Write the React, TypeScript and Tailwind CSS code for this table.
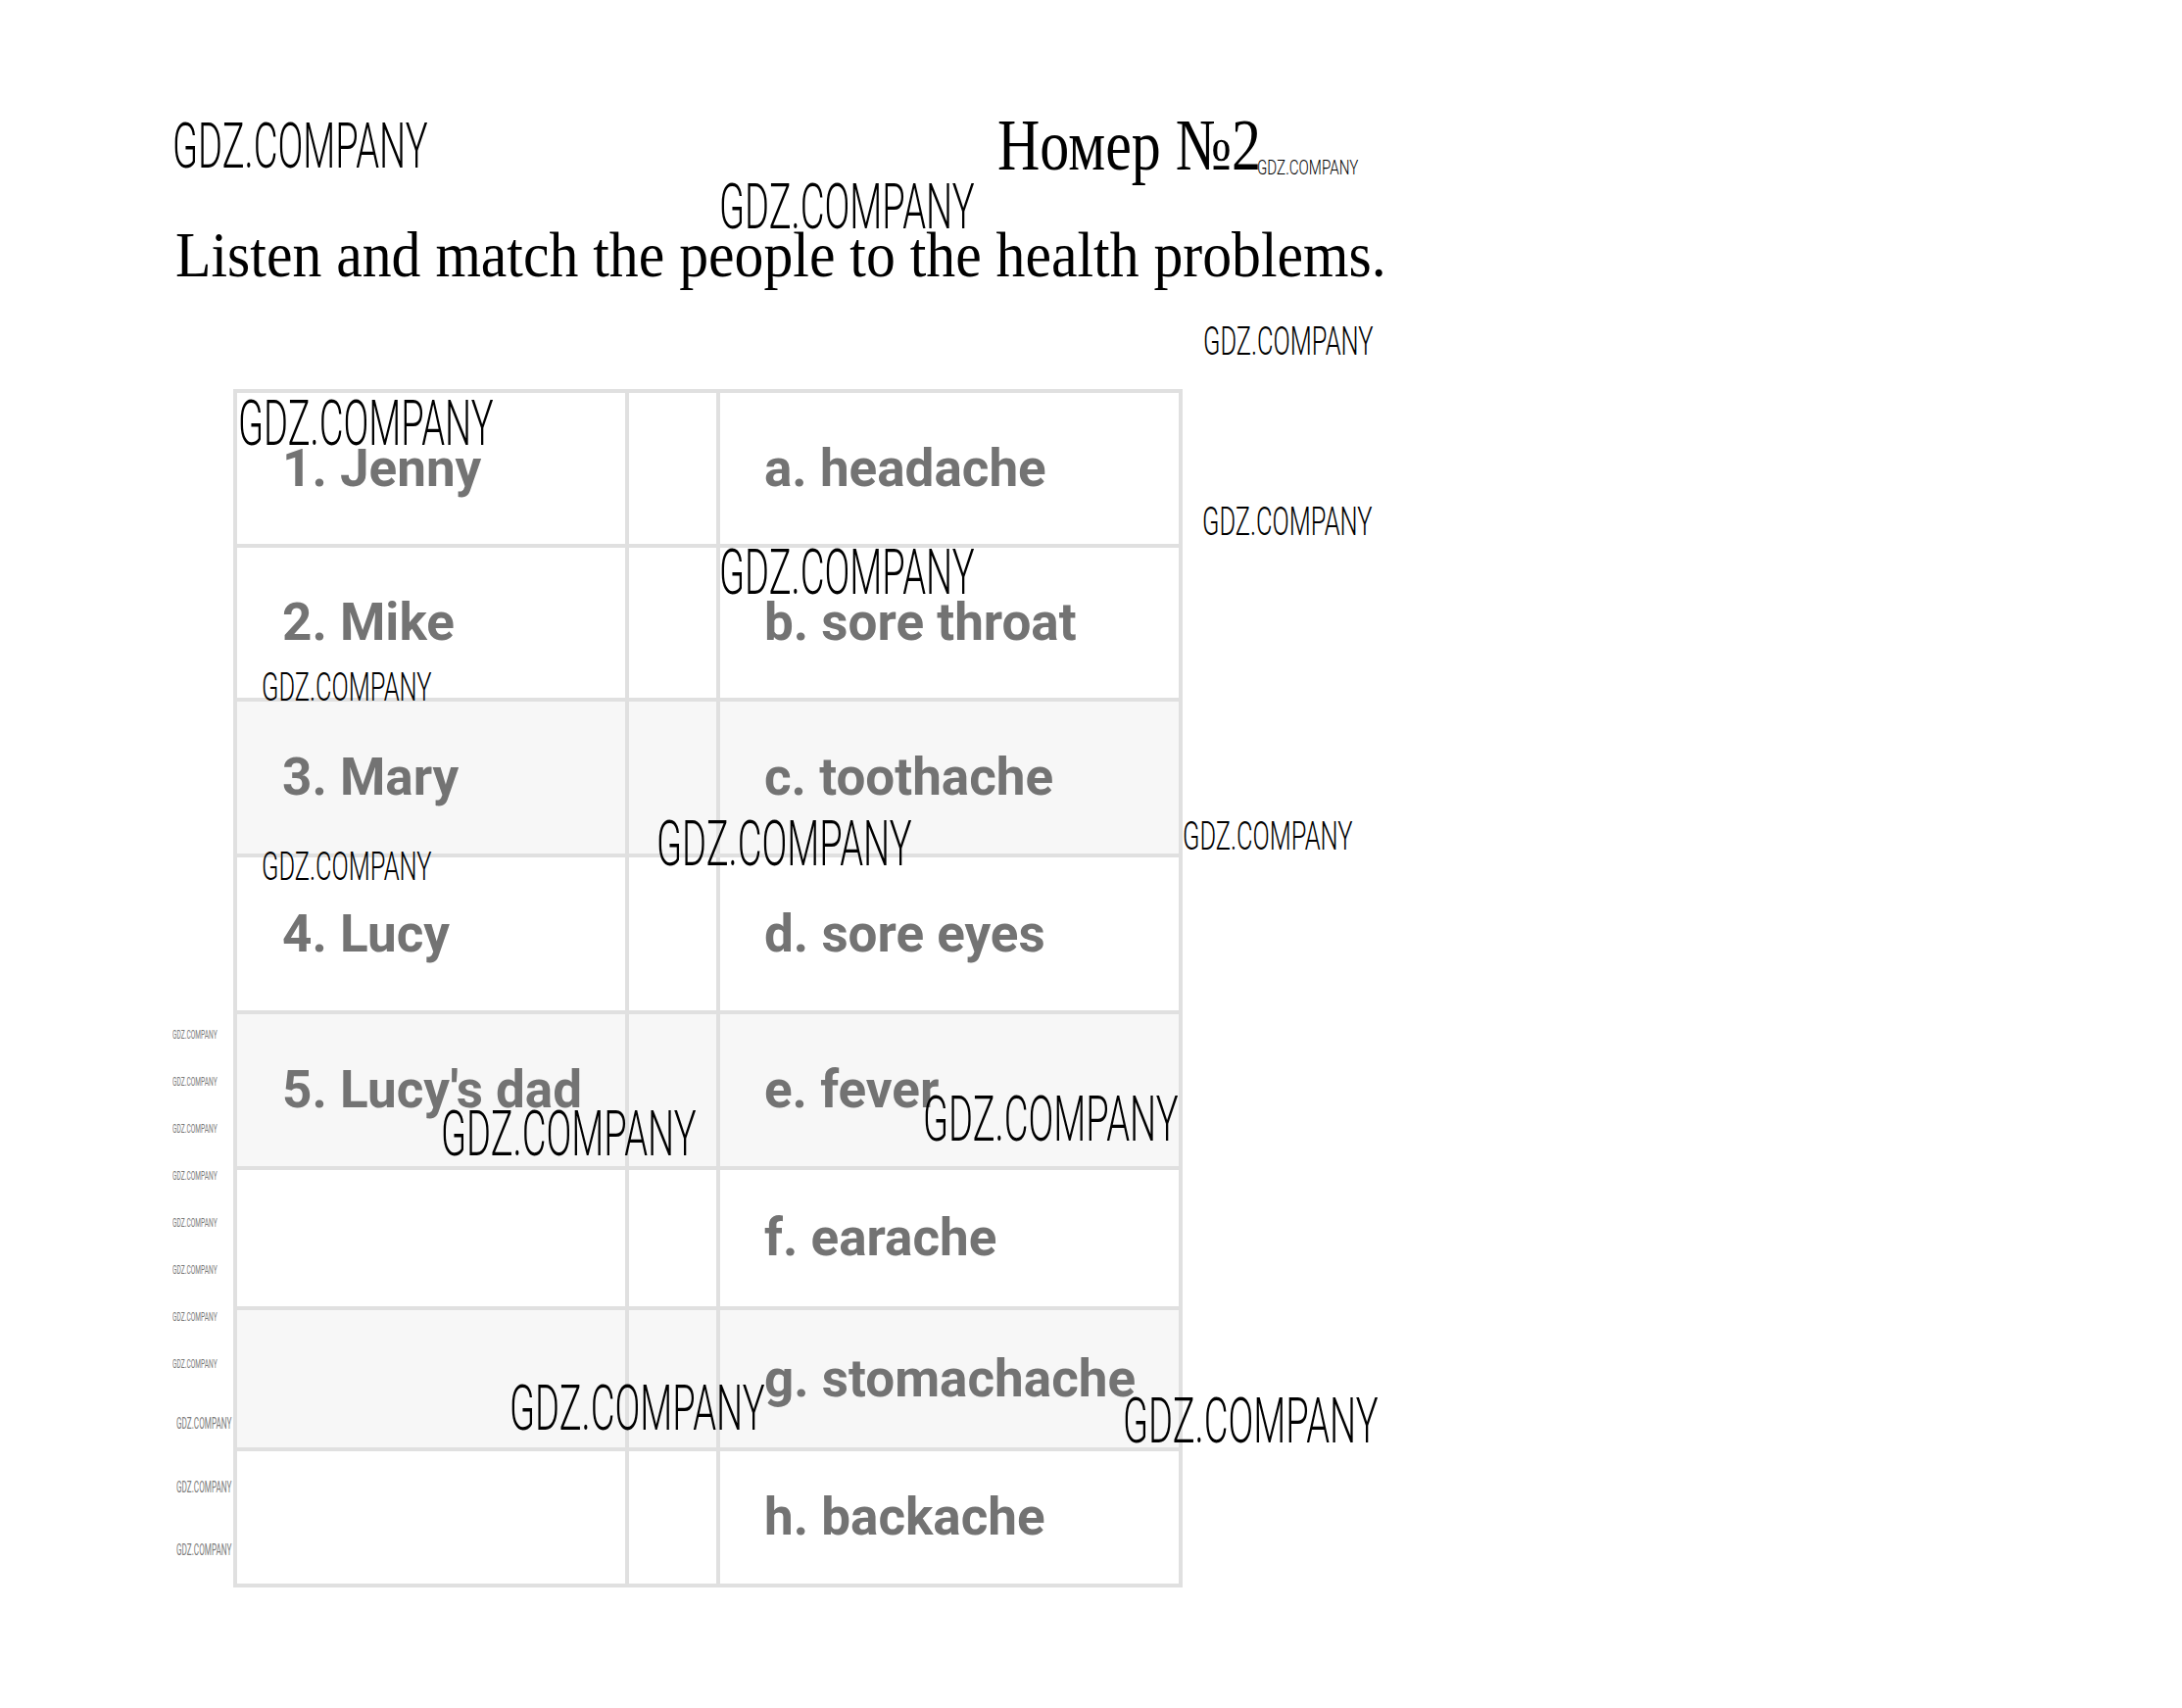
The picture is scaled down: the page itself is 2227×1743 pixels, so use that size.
import React from 'react';

const rows = [
  { left: '1. Jenny', right: 'a. headache', shade: false },
  { left: '2. Mike', right: 'b. sore throat', shade: false },
  { left: '3. Mary', right: 'c. toothache', shade: true },
  { left: '4. Lucy', right: 'd. sore eyes', shade: false },
  { left: "5. Lucy's dad", right: 'e. fever', shade: true },
  { left: '', right: 'f. earache', shade: false },
  { left: '', right: 'g. stomachache', shade: true },
  { left: '', right: 'h. backache', shade: false },
];

// watermark stamps laid over the scan
const marks = [
  'left-[176px] top-[117px] text-[65px] scale-x-[0.587] font-light text-black',
  'left-[734px] top-[179px] text-[65px] scale-x-[0.587] font-light text-black',
  'left-[243px] top-[400px] text-[65px] scale-x-[0.587] font-light text-black',
  'left-[734px] top-[552px] text-[65px] scale-x-[0.587] font-light text-black',
  'left-[670px] top-[829px] text-[65px] scale-x-[0.587] font-light text-black',
  'left-[450px] top-[1125px] text-[65px] scale-x-[0.587] font-light text-black',
  'left-[942px] top-[1110px] text-[65px] scale-x-[0.587] font-light text-black',
  'left-[520px] top-[1405px] text-[65px] scale-x-[0.587] font-light text-black',
  'left-[1146px] top-[1418px] text-[65px] scale-x-[0.587] font-light text-black',
  'left-[1228px] top-[328px] text-[41px] scale-x-[0.62] font-light text-black',
  'left-[1227px] top-[512px] text-[41px] scale-x-[0.62] font-light text-black',
  'left-[1207px] top-[833px] text-[41px] scale-x-[0.62] font-light text-black',
  'left-[267px] top-[681px] text-[41px] scale-x-[0.62] font-light text-black',
  'left-[267px] top-[864px] text-[41px] scale-x-[0.62] font-light text-black',
  'left-[1283px] top-[161px] text-[21px] scale-x-[0.72] font-light text-black',
  'left-[176px] top-[1050px] text-[12px] scale-x-[0.55] font-normal text-[#7a7a7a]',
  'left-[176px] top-[1098px] text-[12px] scale-x-[0.55] font-normal text-[#7a7a7a]',
  'left-[176px] top-[1146px] text-[12px] scale-x-[0.55] font-normal text-[#7a7a7a]',
  'left-[176px] top-[1194px] text-[12px] scale-x-[0.55] font-normal text-[#7a7a7a]',
  'left-[176px] top-[1242px] text-[12px] scale-x-[0.55] font-normal text-[#7a7a7a]',
  'left-[176px] top-[1290px] text-[12px] scale-x-[0.55] font-normal text-[#7a7a7a]',
  'left-[176px] top-[1338px] text-[12px] scale-x-[0.55] font-normal text-[#7a7a7a]',
  'left-[176px] top-[1386px] text-[12px] scale-x-[0.55] font-normal text-[#7a7a7a]',
  'left-[180px] top-[1445px] text-[16px] scale-x-[0.51] font-normal text-[#7a7a7a]',
  'left-[180px] top-[1510px] text-[16px] scale-x-[0.51] font-normal text-[#7a7a7a]',
  'left-[180px] top-[1574px] text-[16px] scale-x-[0.51] font-normal text-[#7a7a7a]',
];

const rowHeights = [
  'h-[158px]',
  'h-[157px]',
  'h-[159px]',
  'h-[160px]',
  'h-[159px]',
  'h-[143px]',
  'h-[144px]',
  'h-[139px]',
];

const cell = 'border-r-4 border-b-4 border-[#e0e0e0] flex items-center';

const App: React.FC = () => {
  return (
    <div className="relative w-full h-[1743px] bg-white overflow-hidden">
      <div className="pt-[110px] ml-[1018px]">
        <div className="origin-left scale-x-[0.8] whitespace-nowrap text-[75px] leading-none text-black font-[family-name:'Liberation_Serif',serif]">
          Номер №2
        </div>
      </div>

      <div className="mt-[42px] ml-[179px]">
        <div className="origin-left scale-x-[0.905] whitespace-nowrap text-[66px] leading-none text-black font-[family-name:'Liberation_Serif',serif]">
          Listen and match the people to the health problems.
        </div>
      </div>

      <div className="mt-[104px] ml-[238px] w-[969px] border-l-4 border-t-4 border-[#e0e0e0] font-[family-name:Roboto,sans-serif] text-[53px] font-bold text-[#737373] leading-none">
        {rows.map((r, i) => (
          <div
            key={i}
            className={`grid grid-cols-[400px_93px_472px] ${rowHeights[i]} ${r.shade ? 'bg-[#f7f7f7]' : 'bg-white'}`}
          >
            <div className={`${cell} pl-[46px]`}>{r.left}</div>
            <div className={cell}></div>
            <div className={`${cell} pl-[45px]`}>{r.right}</div>
          </div>
        ))}
      </div>

      {marks.map((m, i) => (
        <div
          key={i}
          className={`absolute origin-top-left whitespace-nowrap leading-none font-[family-name:Roboto,sans-serif] ${m}`}
        >
          GDZ.COMPANY
        </div>
      ))}
    </div>
  );
};

export default App;
